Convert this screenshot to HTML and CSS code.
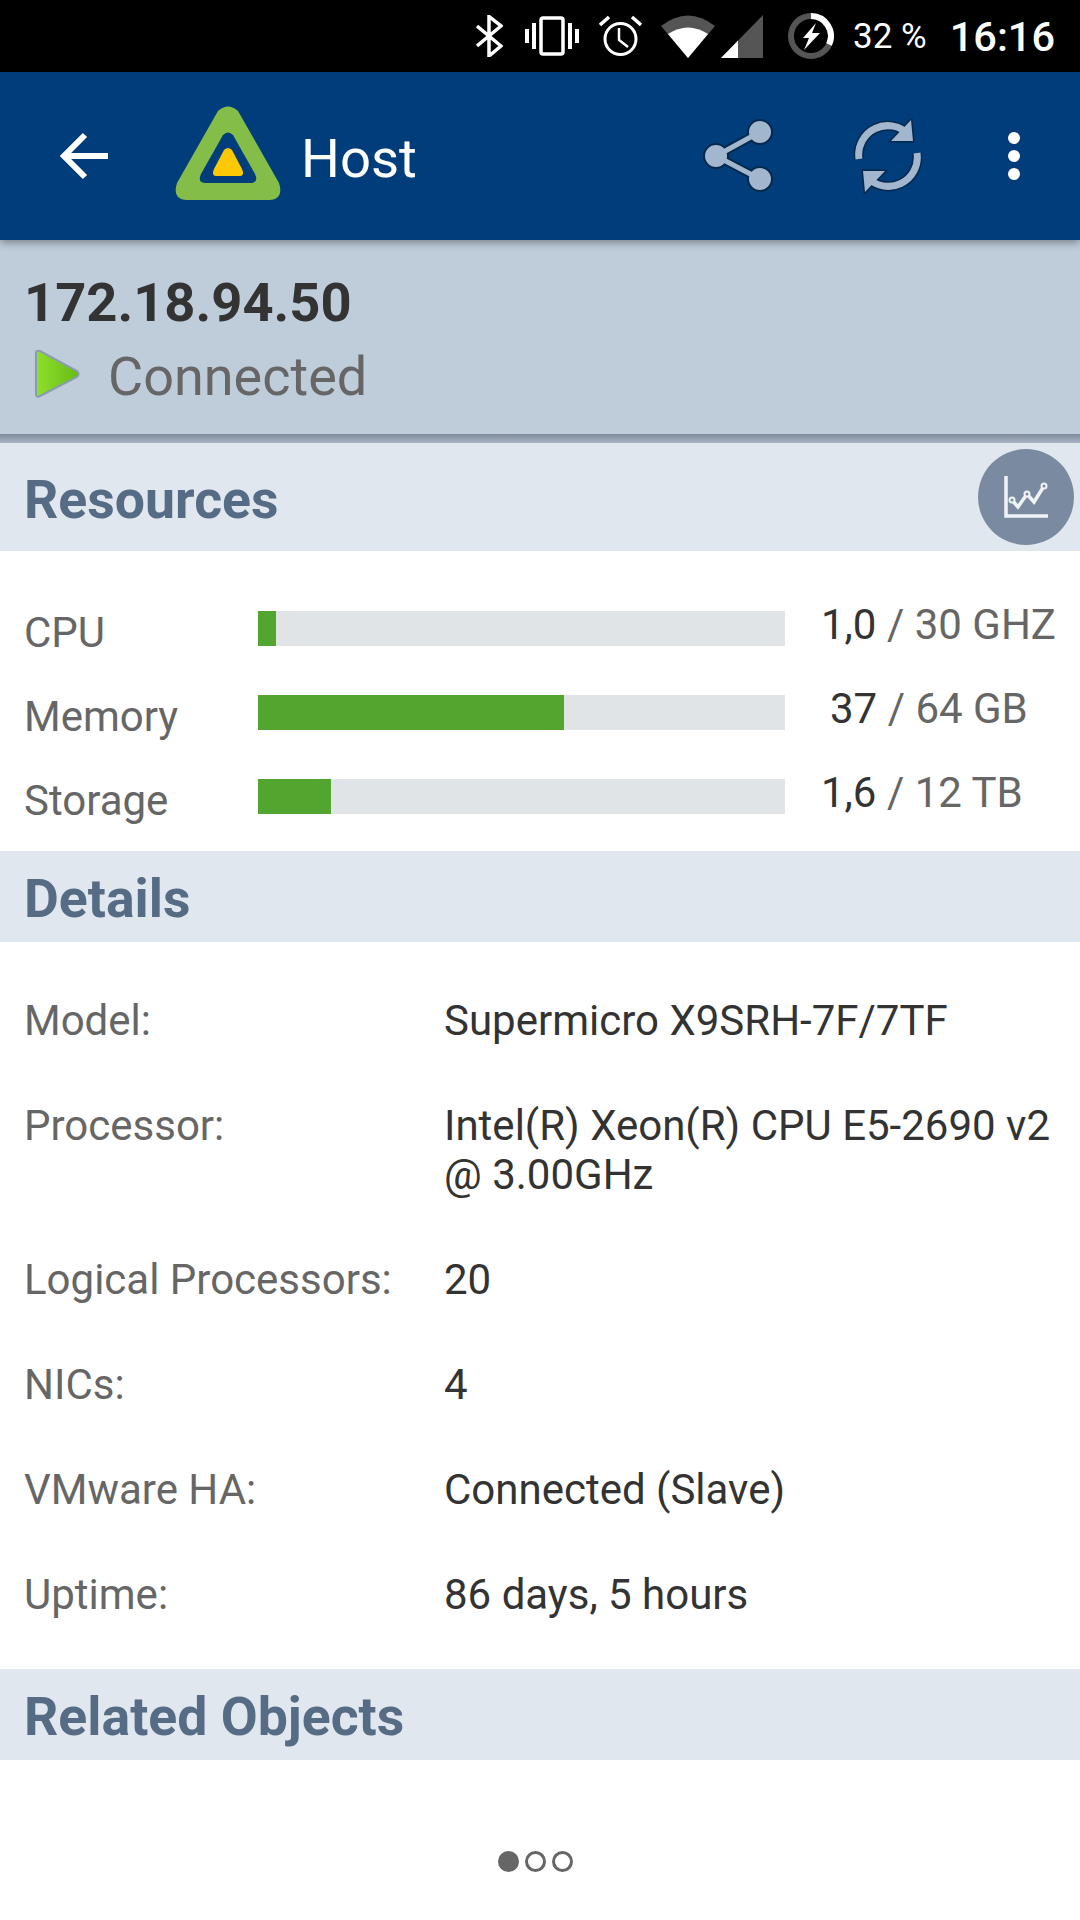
FILE: index.html
```html
<!DOCTYPE html>
<html lang="en">
<head>
    <meta charset="UTF-8">
    <meta name="viewport" content="width=device-width, initial-scale=1.0">
    <title>Host</title>
    <link rel="stylesheet" href="styles.css">
</head>
<body>
    <div class="status-bar">
        <svg class="st-bt" width="27" height="42" viewBox="0 0 27 42"><path d="M1 11 L25 31 L13 41 V1.500 L25 11 L1 31" fill="none" stroke="#fff" stroke-width="3.500"/></svg>
        <svg class="st-vib" width="54" height="40" viewBox="0 0 54 40"><rect x="0" y="13" width="4" height="14" fill="#fff"/><rect x="7" y="7" width="4" height="26" fill="#fff"/><rect x="16" y="2" width="22" height="36" rx="2" fill="none" stroke="#fff" stroke-width="3.500"/><rect x="43" y="7" width="4" height="26" fill="#fff"/><rect x="50" y="13" width="4" height="14" fill="#fff"/></svg>
        <svg class="st-alarm" width="43" height="42" viewBox="0 0 43 42"><circle cx="21.500" cy="24" r="15.500" fill="none" stroke="#fff" stroke-width="3"/><path d="M20 13 V25 L29 32" fill="none" stroke="#fff" stroke-width="2.500"/><path d="M1 10 L10 2 M42 10 L33 2" stroke="#fff" stroke-width="3.500"/></svg>
        <svg class="st-wifi" width="54" height="43" viewBox="0 0 54 43"><path d="M0 11 Q27 -10 54 11 L27 43 Z" fill="#555"/><path d="M7 19 Q27 6 47 19 L27 43 Z" fill="#fff"/></svg>
        <svg class="st-signal" width="42" height="43" viewBox="0 0 42 43"><path d="M0 43 L42 0 V43 Z" fill="#555"/><path d="M0 43 L17 25.500 V43 Z" fill="#fff"/></svg>
        <svg class="st-batt" width="46" height="46" viewBox="0 0 46 46"><circle cx="23" cy="23" r="20" fill="none" stroke="#555" stroke-width="6"/><path d="M23 3 A20 20 0 0 1 41 31.500" fill="none" stroke="#fff" stroke-width="6"/><path d="M28 10 L15 25 H21 L16 37 L32 20 H24 Z" fill="#fff"/></svg>
        <span class="st-pct">32 %</span>
        <span class="st-time">16:16</span>
    </div>

    <header class="app-bar">
        <svg class="back" width="48" height="48" viewBox="0 0 48 48"><path d="M48 24 H4 M25 3 L4 24 L25 45" fill="none" stroke="#fff" stroke-width="6"/></svg>
        <svg class="logo" width="108" height="96" viewBox="0 0 108 96">
            <path d="M44 6 Q54 -3 64 6 L105 78 Q110 94 96 95 H12 Q-2 94 3 78 Z" fill="#84bd48"/>
            <path d="M49 30 Q54 25 59 30 L81 69 Q85 78 76 78 H32 Q23 78 27 69 Z" fill="#003d7a"/>
            <path d="M50 45 Q54 41 58 45 L68 64 Q71 71 66 71 H42 Q37 71 40 64 Z" fill="#fdc806"/>
        </svg>
        <h1 class="app-title">Host</h1>
        <svg class="act act-share" width="70" height="74" viewBox="0 0 70 74">
            <path d="M13 37 L57 13 M13 37 L57 60" stroke="#04294f" stroke-width="9"/>
            <g fill="#a2b6cd" stroke="#04294f" stroke-width="2"><circle cx="13" cy="37" r="12"/><circle cx="57" cy="13" r="12"/><circle cx="57" cy="60" r="12"/></g>
            <path d="M15 36 L55 14 M15 38 L55 59" stroke="#a2b6cd" stroke-width="5"/>
        </svg>
        <svg class="act act-sync" width="68" height="76" viewBox="-34 -38 68 76">
            <g>
                <path d="M-29 3 A29 29 0 0 1 21 -21" fill="none" stroke="#04294f" stroke-width="10"/>
                <path d="M23 -36 L25 -15 L3 -15 Z" fill="#04294f" stroke="#04294f" stroke-width="3"/>
                <path d="M-29 3 A29 29 0 0 1 21 -21" fill="none" stroke="#a2b6cd" stroke-width="7"/>
                <path d="M23 -36 L25 -15 L3 -15 Z" fill="#a2b6cd"/>
            </g>
            <g transform="rotate(180)">
                <path d="M-29 3 A29 29 0 0 1 21 -21" fill="none" stroke="#04294f" stroke-width="10"/>
                <path d="M23 -36 L25 -15 L3 -15 Z" fill="#04294f" stroke="#04294f" stroke-width="3"/>
                <path d="M-29 3 A29 29 0 0 1 21 -21" fill="none" stroke="#a2b6cd" stroke-width="7"/>
                <path d="M23 -36 L25 -15 L3 -15 Z" fill="#a2b6cd"/>
            </g>
        </svg>
        <div class="menu-dots"><i></i><i></i><i></i></div>
    </header>

    <section class="host-head">
        <div class="host-ip">172.18.94.50</div>
        <div class="host-state">
            <svg class="play" width="46" height="50" viewBox="0 0 46 50">
                <defs><linearGradient id="play-g" x1="0" y1="0" x2="1" y2="0"><stop offset="0" stop-color="#8fe02c"/><stop offset="1" stop-color="#68bb14"/></linearGradient></defs>
                <path d="M2 4 Q2 1 6 2 L43 22 Q46 25 43 28 L6 47 Q2 49 2 45 Z" fill="url(#play-g)" stroke="#8a9cb4" stroke-width="2"/>
            </svg>
            <span>Connected</span>
        </div>
    </section>
    <div class="head-edge"></div>

    <section class="sec-head sec-res">
        <h2>Resources</h2>
        <div class="chart-btn">
            <svg width="44" height="42" viewBox="0 0 44 42"><path d="M2 0 V40 H44" fill="none" stroke="#f0f3f6" stroke-width="3.500"/><path d="M8 24 L14 31 L23 18 L30 26 L40 10" fill="none" stroke="#f0f3f6" stroke-width="3.500"/><circle cx="8" cy="24" r="2.500" fill="#7a8ba1" stroke="#f0f3f6" stroke-width="2"/><circle cx="23" cy="18" r="2.500" fill="#7a8ba1" stroke="#f0f3f6" stroke-width="2"/><circle cx="40" cy="10" r="2.500" fill="#7a8ba1" stroke="#f0f3f6" stroke-width="2"/></svg>
        </div>
    </section>

    <section class="usage">
        <div class="usage-row">
            <span class="usage-name">CPU</span>
            <div class="bar"><div class="bar-fill" style="width:3.4%"></div></div>
            <span class="usage-val"><b>1,0</b> / 30 GHZ</span>
        </div>
        <div class="usage-row">
            <span class="usage-name">Memory</span>
            <div class="bar"><div class="bar-fill" style="width:58%"></div></div>
            <span class="usage-val val-mem"><b>37</b> / 64 GB</span>
        </div>
        <div class="usage-row">
            <span class="usage-name">Storage</span>
            <div class="bar"><div class="bar-fill" style="width:13.8%"></div></div>
            <span class="usage-val"><b>1,6</b> / 12 TB</span>
        </div>
    </section>

    <section class="sec-head"><h2>Details</h2></section>

    <section class="details">
        <div class="det-row"><span class="det-key">Model:</span><span class="det-val">Supermicro X9SRH-7F/7TF</span></div>
        <div class="det-row"><span class="det-key">Processor:</span><span class="det-val">Intel(R) Xeon(R) CPU E5-2690 v2<br>@ 3.00GHz</span></div>
        <div class="det-row"><span class="det-key">Logical Processors:</span><span class="det-val">20</span></div>
        <div class="det-row"><span class="det-key">NICs:</span><span class="det-val">4</span></div>
        <div class="det-row"><span class="det-key">VMware HA:</span><span class="det-val">Connected (Slave)</span></div>
        <div class="det-row"><span class="det-key">Uptime:</span><span class="det-val">86 days, 5 hours</span></div>
    </section>

    <section class="sec-head"><h2>Related Objects</h2></section>

    <div class="pager"><i class="on"></i><i></i><i></i></div>
</body>
</html>
```

FILE: styles.css
```css
html, body {
    margin: 0;
    padding: 0;
}
body {
    width: 1080px;
    height: 1920px;
    overflow: hidden;
    background-color: #fff;
    font-family: Roboto, sans-serif;
}
.status-bar {
    height: 72px;
    background-color: #000;
    display: flex;
    align-items: center;
    justify-content: flex-end;
    padding-right: 25px;
    color: #fff;
}
.st-bt { margin-right: 22px; }
.st-vib { margin-right: 20px; }
.st-alarm { margin-right: 19px; }
.st-wifi { margin-right: 6px; }
.st-signal { margin-right: 25px; }
.st-batt { margin-right: 19px; }
.st-pct {
    font-size: 35px;
    margin-right: 23px;
}
.st-time {
    font-size: 41.500px;
    font-weight: 500;
}
.app-bar {
    height: 168px;
    background-color: #003d7a;
    display: flex;
    align-items: center;
    box-shadow: 0 3px 8px rgba(0, 0, 0, 0.35);
    position: relative;
}
.back {
    margin-left: 60px;
    margin-right: 66px;
}
.logo {
    margin-top: -6px;
}
.app-title {
    margin: 4px 0 0 19px;
    font-size: 54.500px;
    font-weight: 400;
    color: #fff;
    flex: 1;
}
.act-share { margin-right: 81px; }
.act-sync { margin-right: 86px; }
.menu-dots {
    display: flex;
    flex-direction: column;
    gap: 6px;
    margin-right: 60px;
}
.menu-dots i {
    width: 12px;
    height: 12px;
    border-radius: 50%;
    background-color: #fff;
}
.host-head {
    height: 194px;
    box-sizing: border-box;
    background-color: #bfcddb;
    padding: 32px 0 0 24px;
}
.host-ip {
    font-size: 54.300px;
    font-weight: 700;
    color: #333;
    line-height: 62px;
}
.host-state {
    display: flex;
    align-items: center;
    margin-top: 13px;
    font-size: 54px;
    color: #666;
    line-height: 60px;
}
.play {
    margin-left: 10px;
    margin-right: 28px;
    margin-top: -6px;
}
.head-edge {
    height: 9px;
    background: linear-gradient(#7f8b9b, #a7b4c3);
}
.sec-head {
    height: 91px;
    box-sizing: border-box;
    background-color: #e1e7ef;
    display: flex;
    align-items: center;
    padding: 4px 0 0 24px;
    position: relative;
}
.sec-head h2 {
    margin: 0;
    font-size: 53.600px;
    font-weight: 700;
    color: #566c85;
}
.sec-res {
    height: 108px;
}
.chart-btn {
    position: absolute;
    top: 6px;
    right: 6px;
    width: 96px;
    height: 96px;
    border-radius: 50%;
    background-color: #7a8ba1;
    display: flex;
    align-items: center;
    justify-content: center;
}
.usage {
    height: 300px;
    box-sizing: border-box;
    padding-top: 60px;
    display: flex;
    flex-direction: column;
    gap: 49px;
}
.usage-row {
    height: 35px;
    display: flex;
    align-items: center;
    font-size: 42px;
    color: #666;
}
.usage-name {
    width: 234px;
    padding-left: 24px;
    position: relative;
    top: 4px;
}
.bar {
    width: 527px;
    height: 35px;
    background-color: #e0e4e7;
}
.bar-fill {
    height: 100%;
    background-color: #52a62f;
}
.usage-val {
    margin-left: 36px;
    position: relative;
    top: -4px;
    white-space: nowrap;
}
.usage-val b {
    font-weight: 400;
    color: #333;
}
.val-mem {
    margin-left: 45px;
}
.details {
    height: 727px;
    box-sizing: border-box;
    padding-top: 26px;
    font-size: 42px;
    line-height: 49px;
}
.det-row {
    display: flex;
    padding: 28px 0;
}
.det-key {
    width: 420px;
    padding-left: 24px;
    color: #666;
    white-space: nowrap;
}
.det-val {
    color: #333;
    white-space: nowrap;
}
.pager {
    display: flex;
    justify-content: center;
    gap: 6px;
    margin-top: 91px;
    padding-right: 9px;
}
.pager i {
    box-sizing: border-box;
    width: 21px;
    height: 21px;
    border-radius: 50%;
    border: 3px solid #666;
}
.pager i.on {
    background-color: #666;
}
```
